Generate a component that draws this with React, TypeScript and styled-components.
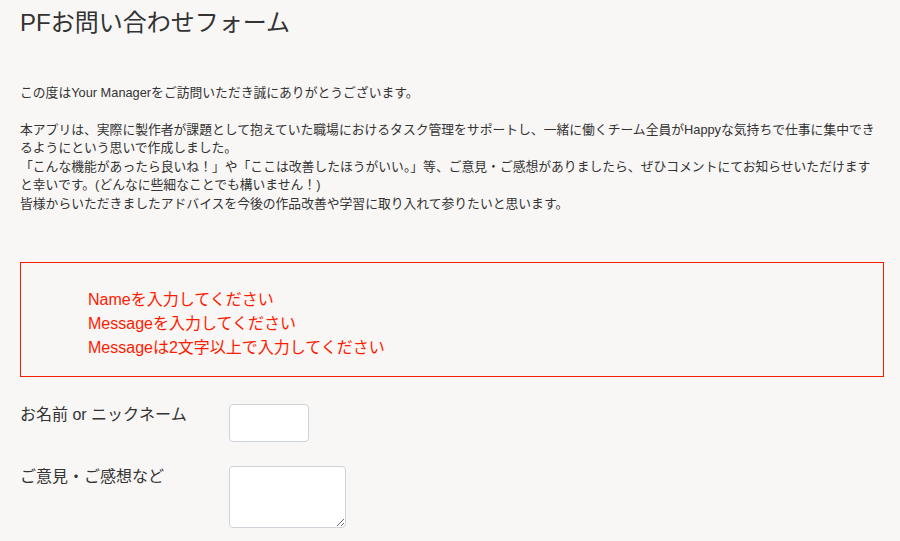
import React from "react";
import styled, { createGlobalStyle } from "styled-components";

const GlobalStyle = createGlobalStyle`
  body {
    margin: 0;
    background-color: #f8f7f5;
    color: #333333;
    font-family: "Liberation Sans", "Noto Sans CJK JP", sans-serif;
  }
`;

const errors = [
  "Nameを入力してください",
  "Messageを入力してください",
  "Messageは2文字以上で入力してください",
];

export default function App() {
  return (
    <>
      <GlobalStyle />
      <Page>
        <Title>PFお問い合わせフォーム</Title>

        <Intro>この度はYour Managerをご訪問いただき誠にありがとうございます。</Intro>
        <Body>
          本アプリは、実際に製作者が課題として抱えていた職場におけるタスク管理をサポートし、一緒に働くチーム全員がHappyな気持ちで仕事に集中でき
          <br />
          るようにという思いで作成しました。
          <br />
          「こんな機能があったら良いね！」や「ここは改善したほうがいい。」等、ご意見・ご感想がありましたら、ぜひコメントにてお知らせいただけます
          <br />
          と幸いです。(どんなに些細なことでも構いません！)
          <br />
          皆様からいただきましたアドバイスを今後の作品改善や学習に取り入れて参りたいと思います。
        </Body>

        <ErrorBox>
          <ErrorList>
            {errors.map((msg) => (
              <ErrorItem key={msg}>{msg}</ErrorItem>
            ))}
          </ErrorList>
        </ErrorBox>

        <Form onSubmit={(e) => e.preventDefault()}>
          <Row>
            <Label htmlFor="name">お名前 or ニックネーム</Label>
            <TextInput id="name" type="text" />
          </Row>
          <Row>
            <Label htmlFor="message">ご意見・ご感想など</Label>
            <TextArea id="message" />
          </Row>
        </Form>
      </Page>
    </>
  );
}

const Page = styled.main`
  padding: 8px 16px 0 20px;
  display: flex;
  flex-direction: column;
`;

const Title = styled.h1`
  margin: 0 0 47px;
  font-size: 24px;
  font-weight: 400;
  line-height: 29px;
  color: #333333;
`;

//explicit line breaks keep the wrapping of the original
const Intro = styled.p`
  margin: 0 0 18px;
  font-size: 12.8px;
  line-height: 18.5px;
  white-space: nowrap;
`;

const Body = styled(Intro)`
  margin: 0;
`;

const ErrorBox = styled.section`
  margin-top: 49px;
  border: 1px solid #f41f00;
  padding: 25px 16px 16px 67px;
`;

const ErrorList = styled.ul`
  margin: 0;
  padding: 0;
  list-style: none;
`;

const ErrorItem = styled.li`
  color: #ff1a00;
  font-size: 16px;
  line-height: 24px;
`;

const Form = styled.form`
  margin-top: 27px;
  display: flex;
  flex-direction: column;
  gap: 24px;
`;

const Row = styled.div`
  display: flex;
  align-items: flex-start;
`;

const Label = styled.label`
  width: 209px;
  flex-shrink: 0;
  font-size: 16px;
  line-height: 22px;
  color: #333333;
`;

const TextInput = styled.input`
  box-sizing: border-box;
  width: 80px;
  height: 38px;
  border: 1px solid #cfd2d8;
  border-radius: 4px;
  background: #ffffff;
  padding: 4px 8px;
  font-size: 15px;
  &:focus {
    outline: none;
  }
`;

const TextArea = styled.textarea`
  box-sizing: border-box;
  width: 117px;
  height: 62px;
  border: 1px solid #cfd2d8;
  border-radius: 4px;
  background: #ffffff;
  padding: 4px 8px;
  font-size: 15px;
  &:focus {
    outline: none;
  }
`;
